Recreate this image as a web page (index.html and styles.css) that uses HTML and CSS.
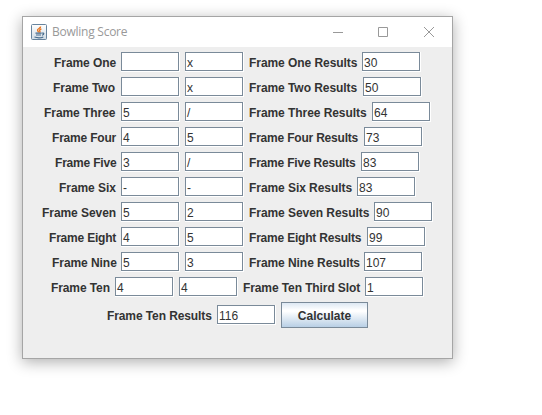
FILE: index.html
```html
<!DOCTYPE html>
<html lang="en">
<head>
<meta charset="utf-8">
<title>Bowling Score</title>
<link rel="stylesheet" href="styles.css">
</head>
<body>
<main class="window">
  <header class="titlebar">
    <svg class="app-icon" width="16" height="16" viewBox="0 0 16 16">
      <defs><linearGradient id="tile" x1="0" y1="0" x2="0" y2="1"><stop offset="0" stop-color="#fff"/><stop offset="1" stop-color="#cfdbe5"/></linearGradient></defs>
      <rect x=".5" y=".5" width="15" height="15" rx="1" fill="url(#tile)" stroke="#66839d"/>
      <path d="M9.6 2.5C9.8 4.5 6 4.6 6.6 6.4C6.8 7.1 7.5 7.6 7.6 8.3M10.4 4.9C8.2 5.8 8.3 6.3 8.9 7C9.2 7.5 8.9 8 8.5 8.4" fill="none" stroke="#e8751f" stroke-width="1.4"/>
      <path d="M4.5 9.1H10.5M5 11H10M3.5 13.1C6 13.9 10.3 13.8 12.3 12.9M10.8 9.2C13.7 8.4 13.2 10.7 11 11.2" fill="none" stroke="#44698b" stroke-width="1.1"/>
    </svg>
    <span class="title">Bowling Score</span>
    <svg class="controls" width="104" height="12" viewBox="0 0 104 12">
      <path d="M1 6.5H11M46.5 1.5H55.5V10.5H46.5ZM92 1L102 11M102 1L92 11" fill="none" stroke="#999"/>
    </svg>
  </header>
  <form class="frames">
    <div class="row one"><label class="name">Frame One</label><div class="field"></div><div class="field">x</div><label class="result">Frame One Results</label><div class="field">30</div></div>
    <div class="row two"><label class="name">Frame Two</label><div class="field"></div><div class="field">x</div><label class="result">Frame Two Results</label><div class="field">50</div></div>
    <div class="row three"><label class="name">Frame Three</label><div class="field">5</div><div class="field">/</div><label class="result">Frame Three Results</label><div class="field">64</div></div>
    <div class="row four"><label class="name">Frame Four</label><div class="field">4</div><div class="field">5</div><label class="result">Frame Four Results</label><div class="field">73</div></div>
    <div class="row five"><label class="name">Frame Five</label><div class="field">3</div><div class="field">/</div><label class="result">Frame Five Results</label><div class="field">83</div></div>
    <div class="row six"><label class="name">Frame Six</label><div class="field">-</div><div class="field">-</div><label class="result">Frame Six Results</label><div class="field">83</div></div>
    <div class="row seven"><label class="name">Frame Seven</label><div class="field">5</div><div class="field">2</div><label class="result">Frame Seven Results</label><div class="field">90</div></div>
    <div class="row eight"><label class="name">Frame Eight</label><div class="field">4</div><div class="field">5</div><label class="result">Frame Eight Results</label><div class="field">99</div></div>
    <div class="row nine"><label class="name">Frame Nine</label><div class="field">5</div><div class="field">3</div><label class="result">Frame Nine Results</label><div class="field">107</div></div>
    <div class="row ten"><label class="name">Frame Ten</label><div class="field">4</div><div class="field">4</div><label class="third">Frame Ten Third Slot</label><div class="field">1</div></div>
    <div class="row ten"><label class="result">Frame Ten Results</label><div class="field">116</div><button type="button" class="calculate">Calculate</button></div>
  </form>
</main>
</body>
</html>
```
FILE: styles.css
```css
* { box-sizing: border-box; }

body {
  min-height: 415px;
  margin: 0;
  padding: 16px 0 0 22px;
  background: #fff;
}

.window {
  width: 431px;
  height: 343px;
  border: 1px solid #a5a5a5;
  background: #eee;
  box-shadow: 0 3px 14px rgba(0, 0, 0, 0.32);
}

.titlebar {
  display: flex;
  align-items: center;
  height: 30px;
  padding: 0 16px 0 8px;
  background: #fff;
}

.controls {
  margin-top: -1px;
}

.title {
  flex: 1;
  margin-left: 5px;
  color: #999;
  font: 12px/16px "Open Sans", "Noto Sans", sans-serif;
  letter-spacing: -0.25px;
}

.frames {
  display: flex;
  flex-direction: column;
  gap: 5px;
  padding-top: 5px;
  font: 12px/20px "Liberation Sans", Arial, sans-serif;
  color: #333;
}

.row {
  display: flex;
  justify-content: center;
  align-items: center;
  gap: 5px;
}

.name,
.result,
.third {
  flex: none;
  height: 20px;
  padding-top: 1px;
  font-weight: bold;
  letter-spacing: var(--tracking, -0.06px);
  white-space: nowrap;
}

.name { width: var(--label); }
.result { width: calc(var(--label) + 46px); }
.third { width: 117px; }

.one { --label: 62px; }
.two { --label: 63px; }
.three { --label: 72px; }
.four { --label: 64px; --tracking: -0.2px; }
.five { --label: 61px; --tracking: -0.2px; }
.six { --label: 57px; }
.seven { --label: 74px; }
.eight { --label: 67px; --tracking: -0.2px; }
.nine { --label: 64px; }
.ten { --label: 59px; --tracking: -0.1px; }

.field {
  flex: none;
  width: 59px;
  height: 20px;
  padding: 1px 2px;
  border: solid #fff;
  border-width: 0 1px 1px 0;
  background: #fff;
  box-shadow: inset 0 0 0 1px #7a8a99;
}

.calculate {
  width: 87px;
  height: 26px;
  padding: 1px 0 0;
  border: 1px solid #7a8a99;
  background: linear-gradient(#dde8f3 0%, #fff 30%, #fff 35%, #b8cfe5 100%);
  color: #333;
  font: bold 12px/20px "Liberation Sans", Arial, sans-serif;
}
```
